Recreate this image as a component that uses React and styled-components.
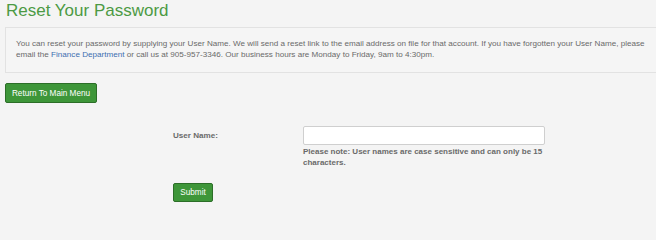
import React from 'react';
import styled, { createGlobalStyle } from 'styled-components';

const GlobalStyle = createGlobalStyle`
  html, body {
    margin: 0;
    padding: 0;
    background: #f4f4f4;
    overflow: hidden;
  }
  body {
    font-family: "Liberation Sans", Arial, sans-serif;
  }
`;

const Page = styled.div`
  padding: 1px 0 0 5px;
  width: 680px;
`;

const Title = styled.h1`
  margin: 0 0 6px 1px;
  font-size: 17px;
  line-height: 20px;
  font-weight: normal;
  color: #4c9a44;
`;

// the box runs past the right edge of the window, as in the page
const InfoBox = styled.div`
  width: 636px;
  border: 1px solid #e2e2e2;
  background: #f5f5f5;
  padding: 10px 10px 12px 10px;
  font-size: 8.1px;
  line-height: 11px;
  color: #6a6a6a;
`;

const Link = styled.a`
  color: #3d6fb0;
  text-decoration: none;
`;

const GreenButton = styled.button`
  display: block;
  height: ${(p) => p.$h}px;
  width: ${(p) => p.$w}px;
  padding: 0;
  background: #3e9639;
  border: 1px solid #2c6e28;
  border-radius: 2px;
  color: #fff;
  font-family: "Liberation Sans", Arial, sans-serif;
  font-size: 8.2px;
`;

const MenuRow = styled.div`
  margin-top: 10px;
`;

const Form = styled.form`
  display: grid;
  grid-template-columns: 130px 242px;
  margin: 23px 0 0 168px;
`;

const Label = styled.label`
  font-size: 8.1px;
  font-weight: bold;
  color: #6a6a6a;
  line-height: 19px;
`;

const Field = styled.div`
  display: flex;
  flex-direction: column;
`;

const Input = styled.input`
  box-sizing: border-box;
  height: 19px;
  width: 242px;
  margin: 0;
  border: 1px solid #cfcfcf;
  border-radius: 2px;
  background: #fff;
`;

const Note = styled.div`
  font-size: 8px;
  font-weight: bold;
  line-height: 11px;
  color: #6a6a6a;
  padding-top: 1px;
`;

const SubmitRow = styled.div`
  grid-column: 1 / 3;
  margin-top: 15px;
`;

export default function App() {
  return (
    <>
      <GlobalStyle />
      <Page>
        <Title>Reset Your Password</Title>
        <InfoBox>
          You can reset your password by supplying your User Name. We will send a reset link to the email address on file for that account. If you have forgotten your User Name, please email the <Link href="#">Finance Department</Link> or call us at 905-957-3346. Our business hours are Monday to Friday, 9am to 4:30pm.
        </InfoBox>
        <MenuRow>
          <GreenButton type="button" $w={92} $h={20}>Return To Main Menu</GreenButton>
        </MenuRow>
        <Form onSubmit={(e) => e.preventDefault()}>
          <Label htmlFor="username">User Name:</Label>
          <Field>
            <Input id="username" type="text" />
            <Note>Please note: User names are case sensitive and can only be 15 characters.</Note>
          </Field>
          <SubmitRow>
            <GreenButton type="submit" $w={40} $h={19}>Submit</GreenButton>
          </SubmitRow>
        </Form>
      </Page>
    </>
  );
}
